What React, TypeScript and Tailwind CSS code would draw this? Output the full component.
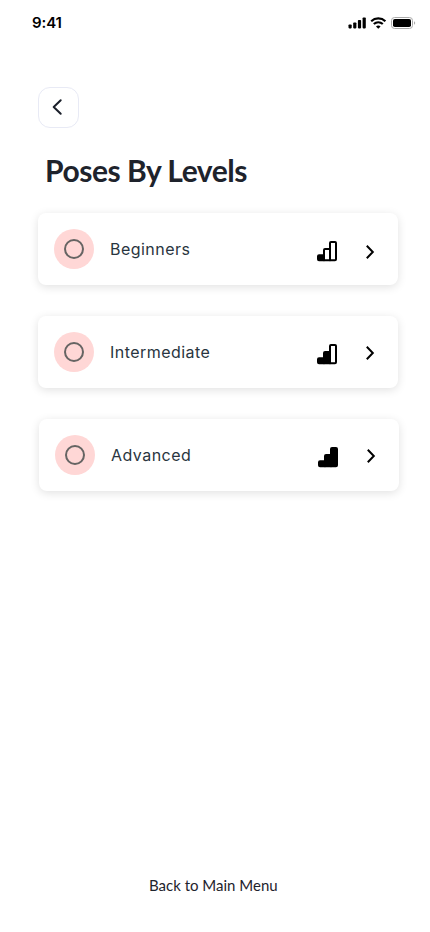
type Level = { name: string; filled: number; row: string; chevron: string };

const levels: Level[] = [
  { name: "Beginners", filled: 1, row: "", chevron: "mt-[5px]" },
  { name: "Intermediate", filled: 2, row: "", chevron: "mt-[2px]" },
  { name: "Advanced", filled: 3, row: "ml-px", chevron: "mt-[2px]" },
];

function LevelIcon({ filled }: { filled: number }) {
  return (
    <svg className="mt-[5px] shrink-0" width="20" height="21" viewBox="0 0 20 21" stroke="#000" strokeWidth="2" strokeLinejoin="round">
      <path d="M1 15.2Q1 14.2 2 14.2H7V19.3H2Q1 19.3 1 18.3Z" fill="#000" />
      <path d="M7 9Q7 8 8 8H13V19.3H7Z" fill={filled > 1 ? "#000" : "#fff"} />
      <path d="M13 2Q13 1 14 1H18Q19 1 19 2V18.3Q19 19.3 18 19.3H13Z" fill={filled > 2 ? "#000" : "#fff"} />
    </svg>
  );
}

function LevelCard({ name, filled, row, chevron }: Level) {
  return (
    <button className={`${row} flex h-[72px] w-[360px] items-center rounded-lg bg-white pl-4 pr-[21px] shadow-[0_2px_10px_rgba(0,0,0,0.12)]`}>
      <span className="flex size-10 items-center justify-center rounded-full bg-[#ffd7d6]">
        <span className="size-5 rounded-full border-2 border-[#666463]" />
      </span>
      <span className="ml-4 mr-auto text-base leading-6 tracking-[0.46px] text-[#293540]">{name}</span>
      <LevelIcon filled={filled} />
      <svg className={`${chevron} ml-7 shrink-0`} width="12" height="16" viewBox="0 0 12 16" fill="none" stroke="#000" strokeWidth="2">
        <path d="m1.8 1.8 6 6.2-6 6.2" />
      </svg>
    </button>
  );
}

function StatusBar() {
  return (
    <header className="flex h-[46px] items-center pl-8 pr-[14px]">
      <time className="mr-auto text-[15px] font-semibold leading-5 tracking-[-0.1px] text-black">9:41</time>
      <svg width="68" height="14" viewBox="0 0 68 14">
        <rect x=".5" y="8.4" width="3.2" height="4" rx=".8" />
        <rect x="5.2" y="6.5" width="3.2" height="5.9" rx=".8" />
        <rect x="9.9" y="4" width="3.2" height="8.4" rx=".8" />
        <rect x="14.6" y="1.5" width="3.2" height="10.9" rx=".8" />
        <g fill="none" stroke="#000" strokeWidth="2.2">
          <path d="M23.2 5.2C27.2 1.5 33.4 1.5 37.4 5.2" />
          <path d="M25.8 8C28.4 5.7 32.2 5.7 34.8 8" />
        </g>
        <path d="M30.3 12.8 28 10.5C29.3 9.3 31.3 9.3 32.6 10.5Z" />
        <rect x="43.5" y="1.5" width="21" height="11" rx="3" fill="none" stroke="#aaa" />
        <rect x="45" y="3" width="18" height="8" rx="1.8" />
        <path d="M66 5.2C67.6 6.1 67.6 7.9 66 8.8Z" fill="#aaa" />
      </svg>
    </header>
  );
}

export default function App() {
  return (
    <main className="flex h-[932px] w-[430px] flex-col bg-white font-['Inter',sans-serif]">
      <StatusBar />
      <div className="pl-[38px] pt-[41px]">
        <button aria-label="Back" className="flex size-[41px] items-center justify-center rounded-xl border border-[#e8eaf5] bg-white">
          <svg className="-ml-1 -mt-px" width="12" height="18" viewBox="0 0 12 18" fill="none" stroke="#1b202b" strokeWidth="2" strokeLinecap="round" strokeLinejoin="round">
            <path d="m9.7 2.2-7 6.8 7 6.8" />
          </svg>
        </button>
        <h1 className="ml-[7px] mt-[22px] whitespace-nowrap font-['Lato',sans-serif] text-[30px] font-bold leading-10 tracking-[-0.47px] text-[#1e232c]">
          Poses By Levels
        </h1>
        <div className="mt-[23px] flex flex-col gap-[31px]">
          {levels.map((level) => (
            <LevelCard key={level.name} {...level} />
          ))}
        </div>
      </div>
      <button className="mb-[37px] ml-[149px] mt-auto w-fit whitespace-nowrap font-['Lato',sans-serif] text-[15px] leading-5 text-[#1e232c]">
        Back to Main Menu
      </button>
    </main>
  );
}
